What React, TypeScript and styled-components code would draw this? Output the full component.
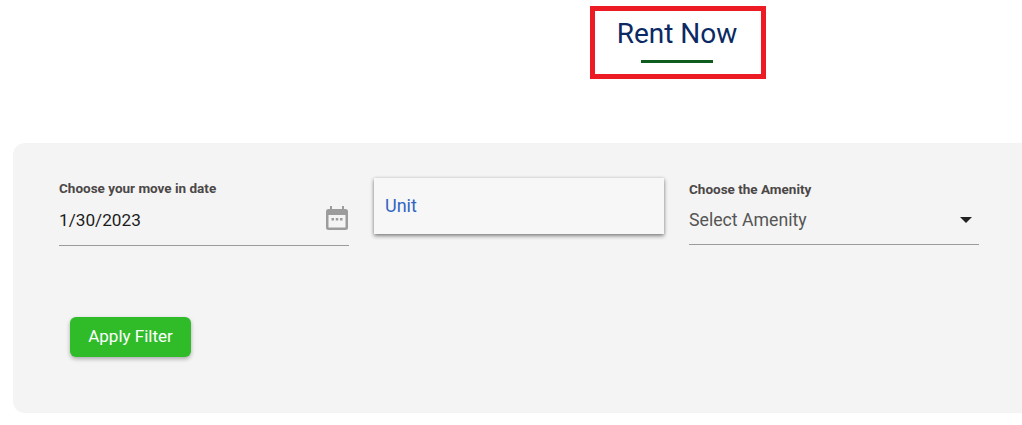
import React from "react";
import styled, { createGlobalStyle } from "styled-components";

const Global = createGlobalStyle`
  html, body { margin: 0; padding: 0; background: #fff; }
  body { font-family: Roboto, "Liberation Sans", sans-serif; overflow: hidden; }
`;
const Page = styled.div`
  width: 1022px;
  height: 425px;
  overflow: hidden;
  padding-top: 6px;
  box-sizing: border-box;
`;
const TitleRow = styled.div`
  display: flex;
  padding-left: 590px;
`;
const TitleBox = styled.div`
  width: 176px;
  height: 73px;
  box-sizing: border-box;
  border: 5px solid #ed1c24;
  padding-right: 2px;
  display: flex;
  flex-direction: column;
  align-items: center;
`;
const Title = styled.h1`
  margin: 6px 0 0;
  font-size: 28px;
  line-height: 34px;
  font-weight: 400;
  color: #0b2a63;
  white-space: nowrap;
`;
const TitleRule = styled.div`
  width: 72px;
  height: 3px;
  margin-top: 9px;
  background: #0f5c1f;
`;
const Panel = styled.section`
  margin: 64px -20px 0 13px;
  height: 270px;
  box-sizing: border-box;
  background: #f4f4f4;
  border-radius: 12px;
  padding: 35px 0 0 46px;
`;
const Fields = styled.div`
  display: grid;
  grid-template-columns: repeat(3, 290px);
  column-gap: 25px;
  align-items: start;
`;
const Field = styled.div<{ $h: number; $top: number }>`
  padding-top: ${(p) => p.$top}px;
  height: ${(p) => p.$h}px;
  box-sizing: border-box;
  border-bottom: 1px solid #9b9b9b;
  display: flex;
  flex-direction: column;
`;
const Label = styled.label`
  font-size: 13.5px;
  line-height: 14px;
  font-weight: 700;
  color: #4b4747;
  white-space: nowrap;
`;
const ValueRow = styled.div<{ $gap: number }>`
  display: flex;
  align-items: center;
  justify-content: space-between;
  margin-top: ${(p) => p.$gap}px;
  height: 26px;
`;
const Value = styled.span<{ $muted?: boolean }>`
  font-size: ${(p) => (p.$muted ? "17.7px" : "17.2px")};
  line-height: 24px;
  color: ${(p) => (p.$muted ? "#555" : "#1c1c1c")};
`;
const UnitCard = styled.div`
  height: 56px;
  box-sizing: border-box;
  background: #f7f7f7;
  box-shadow: 0 2px 4px rgba(0, 0, 0, 0.45), 0 0 3px rgba(0, 0, 0, 0.12);
  display: flex;
  align-items: center;
  padding: 0 0 2px 11px;
  font-size: 18px;
  color: #2f66c4;
`;
const CalendarIcon = styled.svg`
  width: 24px;
  height: 26px;
  margin: -4px 0 0 0;
  display: block;
`;
const CaretIcon = styled.svg`
  width: 12px;
  height: 6px;
  margin-right: 7px;
  display: block;
`;
const ApplyButton = styled.button`
  display: block;
  margin: 71px 0 0 11px;
  width: 121px;
  height: 40px;
  border: 0;
  border-radius: 6px;
  background: #2fbc28;
  color: #fff;
  font-family: inherit;
  font-size: 17px;
  font-weight: 400;
  box-shadow: 0 2px 4px rgba(0, 0, 0, 0.3);
  padding: 0 0 2px;
`;

export default function App() {
  return (
    <Page>
      <Global />
      <TitleRow>
        <TitleBox>
          <Title>Rent Now</Title>
          <TitleRule />
        </TitleBox>
      </TitleRow>
      <Panel>
        <Fields>
          <Field $h={68} $top={3}>
            <Label>Choose your move in date</Label>
            <ValueRow $gap={12}>
              <Value>1/30/2023</Value>
              <CalendarIcon viewBox="0 0 24 26">
                <path
                  fill="#9c9c9c"
                  d="M5 1h2v3h10V1h2v3h1.5A2.5 2.5 0 0 1 23 6.5v16a2.5 2.5 0 0 1-2.5 2.5h-17A2.5 2.5 0 0 1 1 22.500v-16A2.500 2.500 0 0 1 3.500 4H5z"
                />
                <rect x="3.500" y="10" width="17" height="12.500" fill="#f4f4f4" />
                <rect x="6.500" y="13" width="2.500" height="2.500" fill="#9c9c9c" />
                <rect x="10.750" y="13" width="2.500" height="2.500" fill="#9c9c9c" />
                <rect x="15" y="13" width="2.500" height="2.500" fill="#9c9c9c" />
              </CalendarIcon>
            </ValueRow>
          </Field>
          <UnitCard>Unit</UnitCard>
          <Field $h={67} $top={4}>
            <Label>Choose the Amenity</Label>
            <ValueRow $gap={11}>
              <Value $muted>Select Amenity</Value>
              <CaretIcon viewBox="0 0 12 6">
                <path fill="#222" d="M0 0h12L6 6z" />
              </CaretIcon>
            </ValueRow>
          </Field>
        </Fields>
        <ApplyButton>Apply Filter</ApplyButton>
      </Panel>
    </Page>
  );
}
